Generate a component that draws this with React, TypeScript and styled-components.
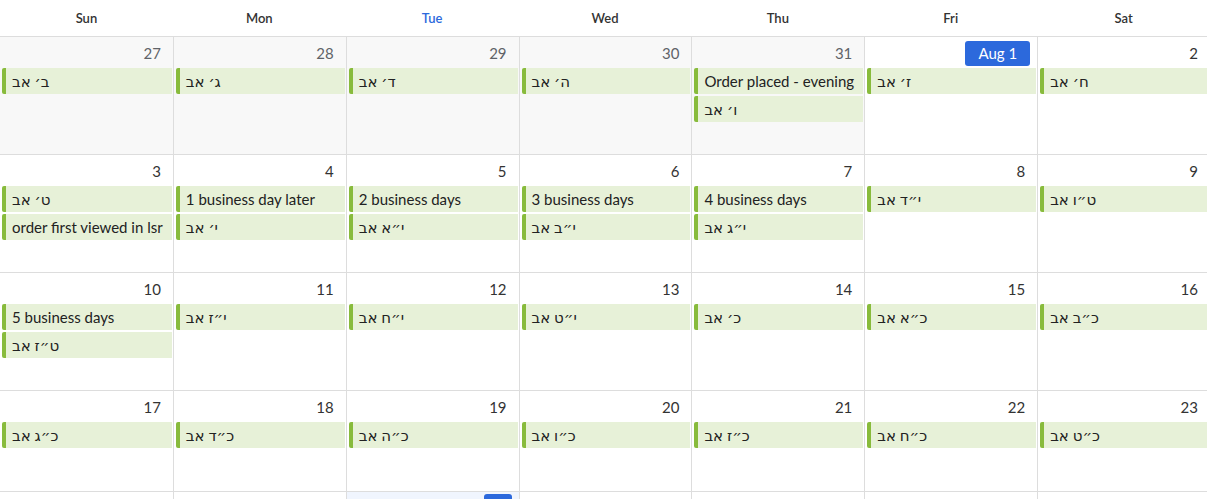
import * as React from 'react'
import styled, { createGlobalStyle } from 'styled-components'

const COLOR = {
  border: '#dddddd',
  text: '#333333',
  muted: '#5f6368',
  blue: '#2c69dc',
  eventBg: '#e7f1d8',
  eventBar: '#88bb3c',
  otherMonth: '#f8f8f8',
  todayBg: '#f0f5fe',
}

const GlobalStyle = createGlobalStyle`
  html, body {
    margin: 0;
    padding: 0;
    background: #fff;
    overflow: hidden;
  }
  body {
    font-family: Lato, "DejaVu Sans", sans-serif;
    color: ${COLOR.text};
  }
`

interface IDay {
  label: string
  events: string[]
  otherMonth?: boolean
  badge?: boolean
  today?: boolean
}

const WEEKDAYS = ['Sun', 'Mon', 'Tue', 'Wed', 'Thu', 'Fri', 'Sat']

const WEEKS: { height: number; days: IDay[] }[] = [
  {
    height: 118,
    days: [
      { label: '27', events: ['ב׳ אב'], otherMonth: true },
      { label: '28', events: ['ג׳ אב'], otherMonth: true },
      { label: '29', events: ['ד׳ אב'], otherMonth: true },
      { label: '30', events: ['ה׳ אב'], otherMonth: true },
      { label: '31', events: ['Order placed - evening', 'ו׳ אב'], otherMonth: true },
      { label: 'Aug 1', events: ['ז׳ אב'], badge: true },
      { label: '2', events: ['ח׳ אב'] },
    ],
  },
  {
    height: 118,
    days: [
      { label: '3', events: ['ט׳ אב', 'order first viewed in lsr'] },
      { label: '4', events: ['1 business day later', 'י׳ אב'] },
      { label: '5', events: ['2 business days', 'י״א אב'] },
      { label: '6', events: ['3 business days', 'י״ב אב'] },
      { label: '7', events: ['4 business days', 'י״ג אב'] },
      { label: '8', events: ['י״ד אב'] },
      { label: '9', events: ['ט״ו אב'] },
    ],
  },
  {
    height: 118,
    days: [
      { label: '10', events: ['5 business days', 'ט״ז אב'] },
      { label: '11', events: ['י״ז אב'] },
      { label: '12', events: ['י״ח אב'] },
      { label: '13', events: ['י״ט אב'] },
      { label: '14', events: ['כ׳ אב'] },
      { label: '15', events: ['כ״א אב'] },
      { label: '16', events: ['כ״ב אב'] },
    ],
  },
  {
    height: 101,
    days: [
      { label: '17', events: ['כ״ג אב'] },
      { label: '18', events: ['כ״ד אב'] },
      { label: '19', events: ['כ״ה אב'] },
      { label: '20', events: ['כ״ו אב'] },
      { label: '21', events: ['כ״ז אב'] },
      { label: '22', events: ['כ״ח אב'] },
      { label: '23', events: ['כ״ט אב'] },
    ],
  },
  {
    height: 60,
    days: [
      { label: '24', events: [] },
      { label: '25', events: [] },
      { label: '26', events: [], today: true, badge: true },
      { label: '27', events: [] },
      { label: '28', events: [] },
      { label: '29', events: [] },
      { label: '30', events: [] },
    ],
  },
]

const App = () => {
  return (
    <Calendar>
      <GlobalStyle />
      <HeaderRow>
        {WEEKDAYS.map(d => (
          <HeaderCell key={d} active={d === 'Tue'}>
            {d}
          </HeaderCell>
        ))}
      </HeaderRow>
      {WEEKS.map((week, wi) => (
        <WeekRow key={wi} style={{ height: week.height }}>
          {week.days.map((day, di) => (
            <DayCell key={di} otherMonth={!!day.otherMonth} today={!!day.today}>
              <DayTop lastRow={wi === WEEKS.length - 1}>
                {day.badge ? (
                  <Badge compact={!!day.today}>{day.label}</Badge>
                ) : (
                  <DayNumber muted={!!day.otherMonth}>{day.label}</DayNumber>
                )}
              </DayTop>
              {day.events.map((ev, ei) => (
                <EventItem key={ei}>{ev}</EventItem>
              ))}
            </DayCell>
          ))}
        </WeekRow>
      ))}
    </Calendar>
  )
}

const Calendar = styled.div`
  width: 1210px;
  display: flex;
  flex-direction: column;
`

const HeaderRow = styled.div`
  display: grid;
  grid-template-columns: repeat(7, 1fr);
  height: 36px;
  border-bottom: 1px solid ${COLOR.border};
`

const HeaderCell = styled.div<{ active: boolean }>`
  display: flex;
  align-items: center;
  justify-content: center;
  font-size: 13px;
  font-weight: 600;
  color: ${props => (props.active ? COLOR.blue : COLOR.text)};
`

const WeekRow = styled.div`
  display: grid;
  grid-template-columns: repeat(7, 1fr);
  border-bottom: 1px solid ${COLOR.border};
  box-sizing: border-box;
`

const DayCell = styled.div<{ otherMonth: boolean; today: boolean }>`
  min-width: 0;
  display: flex;
  flex-direction: column;
  border-left: 1px solid ${COLOR.border};
  background: ${props =>
    props.today ? COLOR.todayBg : props.otherMonth ? COLOR.otherMonth : '#fff'};
  &:first-child {
    border-left: none;
  }
`

const DayTop = styled.div<{ lastRow: boolean }>`
  height: 31px;
  display: flex;
  align-items: flex-start;
  justify-content: flex-end;
  padding: ${props => (props.lastRow ? '2px' : '4px')} 7px 0 0;
  box-sizing: border-box;
`

const DayNumber = styled.span<{ muted: boolean }>`
  font-size: 15px;
  line-height: 24px;
  padding-right: 5px;
  color: ${props => (props.muted ? COLOR.muted : COLOR.text)};
`

const Badge = styled.span<{ compact: boolean }>`
  background: ${COLOR.blue};
  color: #fff;
  font-size: 15px;
  line-height: 25px;
  padding: 0 ${props => (props.compact ? '5px' : '13px')};
  border-radius: 3px;
`

const EventItem = styled.div`
  margin: 0 1px 2px 2px;
  height: 26px;
  line-height: 26px;
  padding: 0 4px 0 6px;
  background: ${COLOR.eventBg};
  border-left: 4px solid ${COLOR.eventBar};
  border-radius: 2px 0 0 2px;
  font-size: 15px;
  color: #222;
  white-space: nowrap;
  overflow: hidden;
`

export default App
